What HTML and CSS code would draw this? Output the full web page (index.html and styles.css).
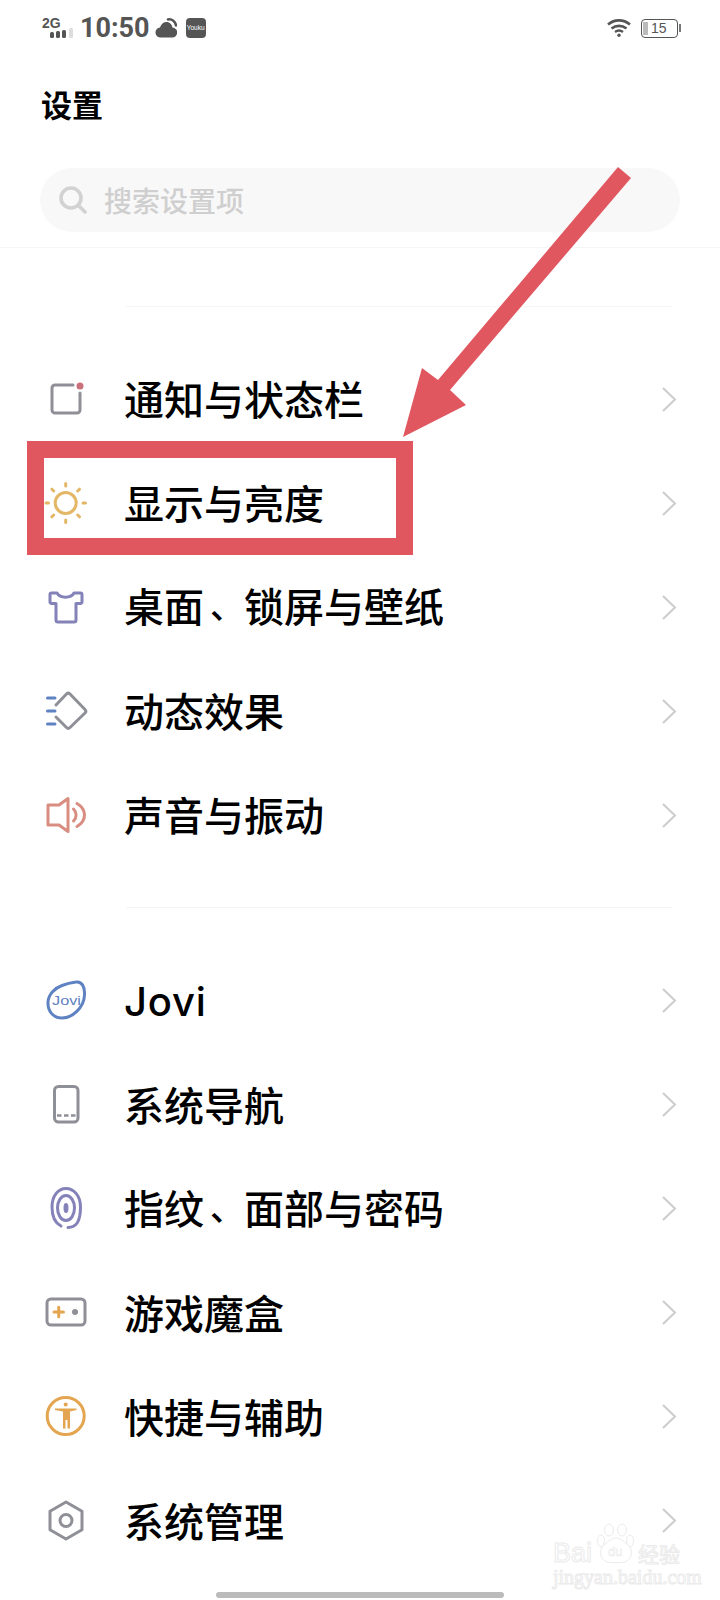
FILE: index.html
```html
<!DOCTYPE html>
<html lang="zh-CN">
<head>
    <meta charset="UTF-8">
    <meta name="viewport" content="width=device-width, initial-scale=1.0">
    <title>设置</title>
    <link rel="stylesheet" href="styles.css">
</head>
<body>
    <div class="screen">
        <header class="header">
            <div class="status-bar">
                <div class="status-left">
                    <div class="signal">
                        <span class="signal-type">2G</span>
                        <svg class="signal-bars" width="24" height="10" viewBox="0 0 24 10">
                            <rect x="0" y="4" width="4" height="6" rx="1.500" fill="#555"/>
                            <rect x="6" y="3" width="4" height="7" rx="1.500" fill="#555"/>
                            <rect x="12" y="2" width="4" height="8" rx="1.500" fill="#555"/>
                            <rect x="19" y="0" width="4" height="10" rx="1.500" fill="#ddd"/>
                        </svg>
                    </div>
                    <span class="time">10:50</span>
                    <svg class="weather" width="22" height="20" viewBox="0 0 22 20">
                        <path d="M13 1.500c4-.8 7.500 2 8 6" fill="none" stroke="#555" stroke-width="2.500" stroke-linecap="round"/>
                        <path d="M6 19.500a5 5 0 0 1-1-10c1-3.500 3.500-5.500 6.500-5.500 3.500 0 5.500 2.500 6 5.500a5 5 0 0 1-.5 10z" fill="#555"/>
                    </svg>
                    <span class="app-badge">Youku</span>
                </div>
                <div class="status-right">
                    <svg width="24" height="18" viewBox="0 0 24 18">
                        <path d="M1 5.500c6.500-5.500 15.500-5.500 22 0" fill="none" stroke="#555" stroke-width="2.600"/>
                        <path d="M4.500 9.500c4.500-3.500 10.500-3.500 15 0" fill="none" stroke="#555" stroke-width="2.600"/>
                        <path d="M8 13c2.500-1.800 5.500-1.800 8 0" fill="none" stroke="#555" stroke-width="2.400"/>
                        <circle cx="12" cy="16.300" r="1.700" fill="#555"/>
                    </svg>
                    <div class="battery">
                        <span class="battery-level"></span>
                        <span class="battery-text">15</span>
                    </div>
                </div>
            </div>
            <h1 class="page-title">设置</h1>
            <div class="search-box">
                <svg width="30" height="28" viewBox="0 0 30 28">
                    <circle cx="13" cy="12" r="10" fill="none" stroke="#d2d2d2" stroke-width="3.600"/>
                    <path d="M21 20l6 6" stroke="#d2d2d2" stroke-width="3.600" stroke-linecap="round"/>
                </svg>
                <span class="search-text">搜索设置项</span>
            </div>
        </header>

        <section class="group">
            <div class="row">
                <svg class="row-icon" viewBox="0 0 60 60">
                    <path class="line grey" d="M37 16H19a3 3 0 0 0-3 3v22a3 3 0 0 0 3 3h22a3 3 0 0 0 3-3V24"/>
                    <circle cx="44" cy="17" r="3.500" fill="#c9707a"/>
                </svg>
                <span class="row-label">通知与状态栏</span>
                <svg class="chevron" viewBox="0 0 16 27"><path d="M2 2l12 11.500L2 25"/></svg>
            </div>
            <div class="row">
                <svg class="row-icon" viewBox="0 0 60 60">
                    <circle class="line sun" cx="29.700" cy="30" r="10.500"/>
                    <path class="line sun" d="M29.700 10.500v2.500M29.700 47v2.500M10 30h2.500M47 30h2.500M17.700 18l-1.800-1.800M41.700 18l1.800-1.800M17.700 42l-1.800 1.800M41.700 42l1.800 1.800"/>
                </svg>
                <span class="row-label">显示与亮度</span>
                <svg class="chevron" viewBox="0 0 16 27"><path d="M2 2l12 11.500L2 25"/></svg>
            </div>
            <div class="row">
                <svg class="row-icon" viewBox="0 0 60 60">
                    <path class="line purple" d="M21 16c3 5.500 14 5.500 17 0h6.500a1.500 1.500 0 0 1 1.500 1.500V25a1.500 1.500 0 0 1-1.500 1.500H40V43a2 2 0 0 1-2 2H22a2 2 0 0 1-2-2V26.500h-4.500A1.500 1.500 0 0 1 14 25v-7.500a1.500 1.500 0 0 1 1.500-1.500z"/>
                </svg>
                <span class="row-label">桌面<span class="punct">、</span>锁屏与壁纸</span>
                <svg class="chevron" viewBox="0 0 16 27"><path d="M2 2l12 11.500L2 25"/></svg>
            </div>
            <div class="row">
                <svg class="row-icon" viewBox="0 0 60 60">
                    <path class="line grey" d="M20 24l10.500-11a2.500 2.500 0 0 1 3.500 0l15 15.500a2.500 2.500 0 0 1 0 3.500L34 46.500a2.500 2.500 0 0 1-3.500 0L20 36"/>
                    <path class="line blue" d="M11.500 17H19M11.500 30H19M11.500 43H19"/>
                </svg>
                <span class="row-label">动态效果</span>
                <svg class="chevron" viewBox="0 0 16 27"><path d="M2 2l12 11.500L2 25"/></svg>
            </div>
            <div class="row">
                <svg class="row-icon" viewBox="0 0 60 60">
                    <path class="line coral" d="M12 20h11l9-6.500v33L23 40H12z"/>
                    <path class="line coral" d="M37.500 24c3.500 3.500 3.500 8.500 0 12M41 18.500c10 6 10 17 0 23"/>
                </svg>
                <span class="row-label">声音与振动</span>
                <svg class="chevron" viewBox="0 0 16 27"><path d="M2 2l12 11.500L2 25"/></svg>
            </div>
        </section>

        <section class="group lower">
            <div class="row">
                <svg class="row-icon" viewBox="0 0 60 60">
                    <path class="line blue" d="M40 12c6-1 9 5 8.500 13C48 38 36 48 26 48c-9 0-14.500-7-14-16 .5-8 7-14 14-16.500 5-2 10-3 14-3.500z"/>
                    <text class="jovi-mark" x="16" y="35" textLength="29" lengthAdjust="spacingAndGlyphs">Jovi</text>
                </svg>
                <span class="row-label latin">Jovi</span>
                <svg class="chevron" viewBox="0 0 16 27"><path d="M2 2l12 11.500L2 25"/></svg>
            </div>
            <div class="row">
                <svg class="row-icon" viewBox="0 0 60 60">
                    <rect class="line grey" x="18.500" y="12.500" width="23.500" height="35.500" rx="4"/>
                    <path class="grey-dash" d="M21 41.500h18.500"/>
                </svg>
                <span class="row-label">系统导航</span>
                <svg class="chevron" viewBox="0 0 16 27"><path d="M2 2l12 11.500L2 25"/></svg>
            </div>
            <div class="row">
                <svg class="row-icon" viewBox="0 0 60 60">
                    <path class="line purple" d="M25 48C19 45 16 38 16 29 16 18 22 10.500 30 10.500S44.500 18 44.500 29c0 7-1 12-3 15.500-2 3-6 5-9.500 5"/>
                    <ellipse class="line purple" cx="30" cy="30" rx="8.500" ry="12.500"/>
                    <ellipse cx="30" cy="30" rx="2.500" ry="5" fill="#8482b8"/>
                </svg>
                <span class="row-label">指纹<span class="punct">、</span>面部与密码</span>
                <svg class="chevron" viewBox="0 0 16 27"><path d="M2 2l12 11.500L2 25"/></svg>
            </div>
            <div class="row">
                <svg class="row-icon" viewBox="0 0 60 60">
                    <rect class="line grey" x="11" y="17" width="38" height="26" rx="4"/>
                    <path class="line orange" d="M18 30h9.500M22.700 25.300v9.500"/>
                    <circle cx="39" cy="30" r="3" fill="#8f9097"/>
                </svg>
                <span class="row-label">游戏魔盒</span>
                <svg class="chevron" viewBox="0 0 16 27"><path d="M2 2l12 11.500L2 25"/></svg>
            </div>
            <div class="row">
                <svg class="row-icon" viewBox="0 0 60 60">
                    <circle class="line orange" cx="29.700" cy="30" r="18.500"/>
                    <circle cx="29.700" cy="18.500" r="2" fill="#e3a550"/>
                    <path d="M19 22.500h21.500V24l-6.500 1.500v17h-2.500V34h-2v8.500H27v-17L19 24z" fill="#e3a550"/>
                </svg>
                <span class="row-label">快捷与辅助</span>
                <svg class="chevron" viewBox="0 0 16 27"><path d="M2 2l12 11.500L2 25"/></svg>
            </div>
            <div class="row">
                <svg class="row-icon" viewBox="0 0 60 60">
                    <path class="line grey" d="M30 12l16 9.200v18.600L30 49l-16-9.200V21.200z"/>
                    <circle class="line grey" cx="30" cy="30.500" r="6"/>
                </svg>
                <span class="row-label">系统管理</span>
                <svg class="chevron" viewBox="0 0 16 27"><path d="M2 2l12 11.500L2 25"/></svg>
            </div>
        </section>

        <!-- annotation drawn over the screenshot -->
        <div class="callout-box"></div>
        <svg class="callout-arrow" viewBox="0 0 720 1600">
            <polygon points="618,167 631,178 450,390 466,405 403,437 422,368 438,380"/>
        </svg>

        <div class="watermark">
            <div class="watermark-top">
                <span class="wm-bai">Bai</span>
                <svg class="wm-paw" width="38" height="42" viewBox="0 0 38 42">
                    <ellipse cx="12" cy="7" rx="4.500" ry="6"/>
                    <ellipse cx="25" cy="7" rx="4.500" ry="6"/>
                    <ellipse cx="4" cy="18" rx="3.500" ry="6"/>
                    <ellipse cx="33" cy="18" rx="3.500" ry="6"/>
                    <path d="M19 15c5 0 8 4 12 7 5 4 5 14-3 17-5 1-13 1-18 0-8-3-8-13-3-17 4-3 7-7 12-7z"/>
                    <text x="11" y="33">du</text>
                </svg>
                <span class="wm-jingyan">经验</span>
            </div>
            <div class="wm-url">jingyan.baidu.com</div>
        </div>

        <div class="home-bar"></div>
    </div>
</body>
</html>
```

FILE: styles.css
```css
/* General styling */
body {
    margin: 0;
    background-color: #ffffff;
    font-family: "Noto Sans CJK SC", sans-serif;
    color: #000000;
}

.screen {
    position: relative;
    width: 720px;
    height: 1600px;
    overflow: hidden;
}

/* Header */
.header {
    height: 247px;
    border-bottom: 1px solid #f5f5f5;
}

.status-bar {
    display: flex;
    justify-content: space-between;
    align-items: center;
    height: 56px;
    padding: 0 42px;
    color: #555555;
}

.status-left {
    display: flex;
    align-items: center;
}

.signal {
    display: flex;
    flex-direction: column;
    width: 32px;
    height: 24px;
}

.signal-type {
    font-family: "Liberation Sans", sans-serif;
    font-size: 14px;
    font-weight: bold;
    line-height: 14px;
}

.signal-bars {
    flex: none;
    margin: -2px 0 0 8px;
}

.time {
    margin: 0 0 0 6px;
    font-family: Roboto, sans-serif;
    font-size: 27px;
    font-weight: 700;
    line-height: 32px;
}

.weather {
    margin-left: 5px;
}

.app-badge {
    display: flex;
    align-items: center;
    justify-content: center;
    width: 20px;
    height: 20px;
    margin-left: 9px;
    background-color: #555555;
    border-radius: 4px;
    color: #ffffff;
    font-family: "Liberation Sans", sans-serif;
    font-size: 6.500px;
    line-height: 20px;
}

.status-right {
    display: flex;
    align-items: center;
    gap: 10px;
}

.battery {
    position: relative;
    display: flex;
    align-items: center;
    box-sizing: border-box;
    width: 37px;
    height: 19px;
    border: 1.500px solid #555555;
    border-radius: 4px;
}

.battery::after {
    content: "";
    position: absolute;
    right: -4px;
    top: 4px;
    width: 2px;
    height: 8px;
    background-color: #777777;
}

.battery-level {
    width: 5px;
    height: 13px;
    margin-left: 1px;
    background-color: #bbbbbb;
}

.battery-text {
    margin-left: 3px;
    font-family: "Liberation Sans", sans-serif;
    font-size: 14px;
    line-height: 16px;
}

.page-title {
    margin: 26px 0 0;
    padding-left: 41px;
    font-size: 31px;
    font-weight: 700;
    line-height: 44px;
}

.search-box {
    display: flex;
    align-items: center;
    gap: 16px;
    height: 64px;
    margin: 42px 40px 0;
    padding-left: 18px;
    background-color: #f8f8f8;
    border-radius: 32px;
}

.search-text {
    font-size: 28px;
    font-weight: 500;
    color: #cfcfcf;
}

/* Settings rows */
.group {
    margin: 40px 0 0;
}

.group::before {
    content: "";
    display: block;
    height: 1px;
    margin: 0 47px 40px 126px;
    background-color: #f5f5f5;
}

.header + .group {
    margin-top: 58px;
}

.row {
    display: flex;
    align-items: center;
    height: 104px;
    padding: 0 43px 0 36px;
}

.row-icon {
    flex: none;
    width: 60px;
    height: 60px;
}

.row-label {
    flex: 1;
    margin-left: 28px;
    padding-bottom: 2px;
    font-size: 40px;
    font-weight: 500;
    line-height: 56px;
}

.lower .row-label {
    padding-bottom: 0;
}

.lower .row-label.latin {
    padding-top: 4px;
    font-family: Inter, sans-serif;
    letter-spacing: 0.800px;
}

/* the comma sits nearer the middle of its cell in the screenshot */
.punct {
    display: inline-block;
    padding-left: 6px;
    font-size: 34px;
    transform: translateY(-3px);
}

.chevron {
    flex: none;
    width: 16px;
    height: 27px;
    fill: none;
    stroke: #cccccc;
    stroke-width: 2;
}

/* Icon strokes */
.line {
    fill: none;
    stroke-width: 3;
    stroke-linecap: round;
    stroke-linejoin: round;
}

.grey { stroke: #8f9097; }
.purple { stroke: #8482b8; }
.blue { stroke: #5f82c2; }
.coral { stroke: #d98c80; }
.orange { stroke: #e3a550; }
.sun { stroke: #e3b766; }

.grey-dash {
    fill: none;
    stroke: #8f9097;
    stroke-width: 2.500;
    stroke-dasharray: 4.500 2.500;
}

.jovi-mark {
    fill: #5f82c2;
    font-family: "Liberation Sans", sans-serif;
    font-size: 13px;
}

/* Red annotation */
.callout-box {
    position: absolute;
    left: 27px;
    top: 441px;
    box-sizing: border-box;
    width: 386px;
    height: 114px;
    border: 17px solid #e05760;
}

.callout-arrow {
    position: absolute;
    left: 0;
    top: 0;
    width: 720px;
    height: 1600px;
    fill: #e05760;
}

/* Baidu watermark */
.watermark {
    position: absolute;
    left: 553px;
    top: 1523px;
    width: 130px;
    color: #ffffff;
    -webkit-text-stroke: 1px #ebebeb;
}

.watermark-top {
    display: flex;
    align-items: flex-end;
    height: 42px;
}

.wm-bai {
    width: 44px;
    font-family: "Liberation Sans", sans-serif;
    font-size: 27px;
    line-height: 24px;
}

.wm-paw {
    flex: none;
    fill: #ffffff;
    stroke: #ebebeb;
    stroke-width: 1;
}

.wm-paw text {
    font-family: "Liberation Sans", sans-serif;
    font-size: 13px;
    -webkit-text-stroke: 0;
    stroke-width: 0.600;
}

.wm-jingyan {
    margin-left: 3px;
    font-size: 21px;
    line-height: 24px;
}

.wm-url {
    margin-top: 2px;
    font-family: "Liberation Serif", serif;
    font-size: 20px;
    line-height: 20px;
    white-space: nowrap;
}

.home-bar {
    position: absolute;
    left: 216px;
    top: 1592px;
    width: 288px;
    height: 6px;
    background-color: #bbbbbb;
    border-radius: 3px;
}
```
